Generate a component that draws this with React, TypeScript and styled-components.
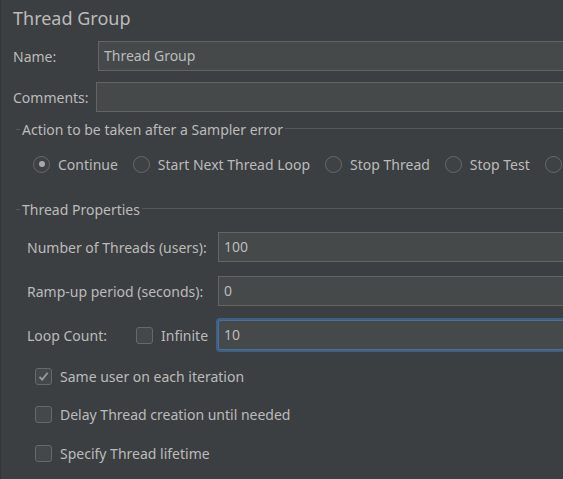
import React, {FC} from "react";
import styled, {createGlobalStyle} from "styled-components";

const GlobalStyle = createGlobalStyle`
  html, body {
    margin: 0;
    padding: 0;
    background: #3c3f41;
    overflow: hidden;
  }
  body {
    font-family: "Noto Sans", "Open Sans", sans-serif;
  }
`;

const Panel = styled.div`
  width: 620px;
  height: 479px;
  box-sizing: border-box;
  border-left: 1px solid #343638;
  padding-left: 12px;
  color: #bbbbbb;
  font-size: 14px;
`;

const Title = styled.div`
  height: 36px;
  line-height: 36px;
  font-size: 18px;
`;

const Row = styled.div<{ $top: number; $indent?: number }>`
  display: flex;
  align-items: center;
  margin-top: ${(p) => p.$top}px;
  padding-left: ${(p) => p.$indent || 0}px;
`;

const Label = styled.div<{ $width: number }>`
  width: ${(p) => p.$width}px;
  flex-shrink: 0;
  white-space: nowrap;
`;

const TextField = styled.div<{ $focused?: boolean }>`
  flex: 1;
  height: 30px;
  box-sizing: border-box;
  background: #45494a;
  border: 1px solid ${(p) => (p.$focused ? "#4a6f96" : "#646464")};
  box-shadow: ${(p) => (p.$focused ? "0 0 0 2px #3d6185" : "none")};
  border-radius: ${(p) => (p.$focused ? "2px" : "0")};
  padding-left: 5px;
  line-height: 28px;
  color: #bbbbbb;
  white-space: nowrap;
`;

const GroupTitle = styled.div<{ $top: number }>`
  display: flex;
  align-items: center;
  height: 20px;
  margin-top: ${(p) => p.$top}px;
  margin-left: 3px;
  white-space: nowrap;

  &::before {
    content: "";
    width: 4px;
    height: 1px;
    background: #55595b;
    margin-right: 2px;
  }

  &::after {
    content: "";
    flex: 1;
    height: 1px;
    background: #55595b;
    margin-left: 2px;
    margin-top: -2px;
  }
`;

const RadioRow = styled.div`
  display: flex;
  align-items: center;
  height: 24px;
  margin-top: 13px;
  padding-left: 20px;
  gap: 15px;
  white-space: nowrap;
`;

const Option = styled.div`
  display: flex;
  align-items: center;
  gap: 8px;
  height: 24px;
`;

const RadioCircle = styled.span<{ $checked?: boolean }>`
  width: 17px;
  height: 17px;
  box-sizing: border-box;
  border-radius: 50%;
  border: 1px solid #666869;
  background: #3f4244;
  display: flex;
  align-items: center;
  justify-content: center;
  flex-shrink: 0;

  &::after {
    content: "";
    display: ${(p) => (p.$checked ? "block" : "none")};
    width: 6px;
    height: 6px;
    border-radius: 50%;
    background: #a9a9a9;
  }
`;

const CheckBox = styled.span`
  width: 17px;
  height: 17px;
  box-sizing: border-box;
  border-radius: 3px;
  border: 1px solid #66686a;
  background: #43494a;
  display: flex;
  align-items: center;
  justify-content: center;
  flex-shrink: 0;
`;

const CheckRow = styled.div<{ $top: number }>`
  display: flex;
  align-items: center;
  gap: 8px;
  height: 24px;
  margin-top: ${(p) => p.$top}px;
  padding-left: 22px;
  white-space: nowrap;
`;

const Check: FC<{ checked?: boolean }> = ({checked}) => (
    <CheckBox>
        {checked && (
            <svg width="11" height="11" viewBox="0 0 11 11">
                <path d="M1.5 5.8 L4.2 8.6 L9.6 1.8" fill="none" stroke="#9c9c9c" strokeWidth="1.7"/>
            </svg>
        )}
    </CheckBox>
);

// the last option only shows its circle at the right edge of the window
const errorActions = [
    {label: "Continue", checked: true},
    {label: "Start Next Thread Loop"},
    {label: "Stop Thread"},
    {label: "Stop Test"},
    {label: ""},
];

const App: FC = () => {
    return (
        <Panel>
            <GlobalStyle/>
            <Title>Thread Group</Title>

            <Row $top={5}>
                <Label $width={85}>Name:</Label>
                <TextField>Thread Group</TextField>
            </Row>
            <Row $top={11}>
                <Label $width={83}>Comments:</Label>
                <TextField/>
            </Row>

            <GroupTitle $top={7}>Action to be taken after a Sampler error</GroupTitle>
            <RadioRow>
                {errorActions.map((a, i) => (
                    <Option key={i}>
                        <RadioCircle $checked={a.checked}/>
                        {a.label}
                    </Option>
                ))}
            </RadioRow>

            <GroupTitle $top={23}>Thread Properties</GroupTitle>
            <Row $top={13} $indent={14}>
                <Label $width={191}>Number of Threads (users):</Label>
                <TextField>100</TextField>
            </Row>
            <Row $top={14} $indent={14}>
                <Label $width={191}>Ramp-up period (seconds):</Label>
                <TextField>0</TextField>
            </Row>
            <Row $top={14} $indent={14}>
                <Label $width={109}>Loop Count:</Label>
                <Option>
                    <Check/>
                    <Label $width={57}>Infinite</Label>
                </Option>
                <TextField $focused>10</TextField>
            </Row>

            <CheckRow $top={14}>
                <Check checked/>
                Same user on each iteration
            </CheckRow>
            <CheckRow $top={14}>
                <Check/>
                Delay Thread creation until needed
            </CheckRow>
            <CheckRow $top={15}>
                <Check/>
                Specify Thread lifetime
            </CheckRow>
        </Panel>
    );
};

export default App;
